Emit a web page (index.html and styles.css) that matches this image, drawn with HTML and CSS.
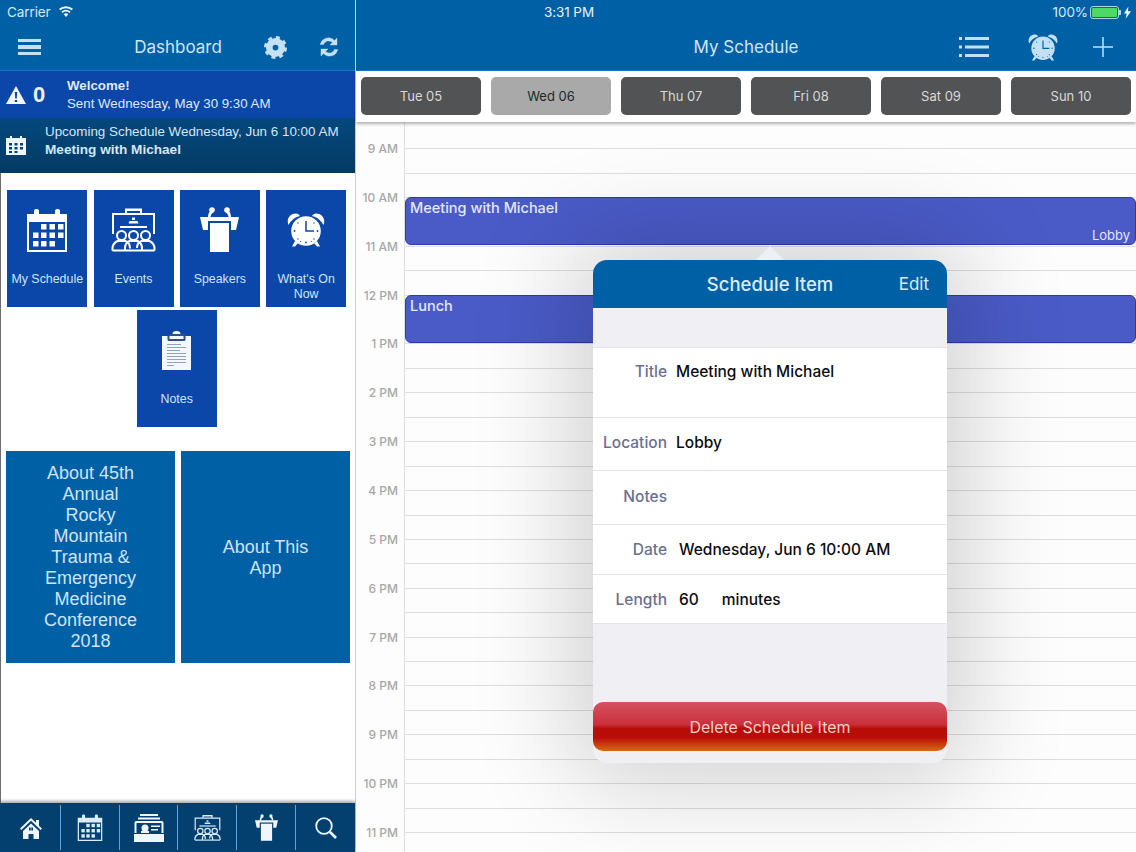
FILE: index.html
```html
<!DOCTYPE html>
<html lang="en">
<head>
<meta charset="utf-8">
<title>My Schedule</title>
<link rel="stylesheet" href="styles.css">
</head>
<body>
<svg class="sprite" aria-hidden="true">
  <symbol id="i-cal" viewBox="0 0 42 44">
    <path d="M1 6h7V3a2 2 0 0 1 2-2h1a2 2 0 0 1 2 2v3h16V3a2 2 0 0 1 2-2h1a2 2 0 0 1 2 2v3h7v38H1zM3 14v28h36V14z" fill-rule="evenodd"/>
    <rect x="15" y="16" width="5.500" height="5.500"/><rect x="23.500" y="16" width="5.500" height="5.500"/><rect x="32" y="16" width="5.500" height="5.500"/>
    <rect x="7" y="24.500" width="5.500" height="5.500"/><rect x="15" y="24.500" width="5.500" height="5.500"/><rect x="23.500" y="24.500" width="5.500" height="5.500"/><rect x="32" y="24.500" width="5.500" height="5.500"/>
    <rect x="7" y="33" width="5.500" height="5.500"/><rect x="15" y="33" width="5.500" height="5.500"/><rect x="23.500" y="33" width="5.500" height="5.500"/>
  </symbol>
  <symbol id="i-event" viewBox="0 0 45 45">
    <path d="M14 6V1.500h17V6h13v21h-2V8H3v19H1V6zM16 4v2h13V4z" fill-rule="evenodd"/>
    <rect x="21" y="10.500" width="3" height="2.500"/><path d="M18.500 14h8l1 2.500h-10z"/><rect x="9" y="19" width="27" height="2"/>
    <g class="ln ppl">
      <circle cx="10.500" cy="28.500" r="4.500"/><circle cx="22.500" cy="28.500" r="4.500"/><circle cx="34.500" cy="28.500" r="4.500"/>
      <path d="M1.500 43.500v-2c0-4 3-6.500 5-7.500h8c3 1 4.500 3.500 4.500 7.500"/><path d="M14 43.500v-2c0-4 2-6.500 4.500-7.500h8c2.500 1 4.500 3.500 4.500 7.500v2"/><path d="M26 41c0-4 1.500-6 4.500-7h8c2 1 5 3.500 5 7.500v2"/>
      <path d="M1.500 43.500h42"/>
    </g>
  </symbol>
  <symbol id="i-podium" viewBox="0 0 39 45">
    <path d="M0 10h39l-3 13h-5V14H8v9H3z"/><rect x="10" y="16" width="19" height="29"/>
    <circle cx="12" cy="3" r="2.800"/><circle cx="27" cy="3" r="2.800"/>
    <path d="M11 3c-2 2-3 4-3 7h2.500c0-2 1-3 3-5zM28 3c2 2 3 4 3 7h-2.500c0-2-1-3-3-5z"/>
  </symbol>
  <symbol id="i-clock" viewBox="0 0 38 34">
    <circle cx="19" cy="18" r="14.800"/>
    <path d="M1.500 12C-1 6 3 .5 9 .5c2 0 3 1 4 2.500C8 4 4 7.500 1.500 12zM36.500 12c2.500-6-1.500-11.500-7.500-11.500-2 0-3 1-4 2.500 5 1 9 4.500 11.500 9z"/>
    <path d="M8 28l-3 5.500h3l3-3.500zM30 28l3 5.500h-3l-3-3.500z"/>
    <path class="cut" d="M19 8v10h8"/>
    <g class="tick"><circle cx="19" cy="29.500" r=".9"/><circle cx="7.500" cy="18" r=".9"/><circle cx="30.500" cy="18" r=".9"/><circle cx="11" cy="10" r=".7"/><circle cx="27" cy="10" r=".7"/><circle cx="11" cy="26" r=".7"/><circle cx="27" cy="26" r=".7"/><circle cx="13.500" cy="28.500" r=".6"/><circle cx="24.500" cy="28.500" r=".6"/></g>
  </symbol>
  <symbol id="i-notes" viewBox="0 0 29 39">
    <rect y="5" width="29" height="34" fill="#f4f7fb"/>
    <path d="M10.500 3a4 3 0 0 1 8 0v2h-8z" fill="#f4f7fb"/>
    <path d="M5.500 5c0-1 .8-2 2-2h14c1.200 0 2 1 2 2v3.500c0 1-.8 1.500-2 1.500h-14c-1.200 0-2-.5-2-1.500z" fill="#2d4f8f"/>
    <path d="M7.500 5h14v3h-14z" fill="#f4f7fb"/>
    <path d="M5 13.500h14M5 16.500h19M5 19.500h13M5 22.500h19M5 25.500h19M5 28.500h19M5 31.500h19M5 34.500h7" stroke="#8497bc" stroke-width=".9" fill="none"/>
  </symbol>
  <symbol id="i-home" viewBox="0 0 22 22">
    <path d="M11 1L0 11.500l1.300 1.400L11 3.800l9.700 9.100 1.300-1.400-3-2.800V3h-3v2.700z"/>
    <path d="M3 14l8-7.500 8 7.500v8h-5.500v-5h-5v5H3zM9 10.500v3h1.700v-3zM11.300 10.500v3H13v-3z" fill-rule="evenodd"/>
  </symbol>
  <symbol id="i-box" viewBox="0 0 30 28">
    <rect x="6" y="0" width="18" height="2"/><rect x="4" y="3.500" width="22" height="2"/>
    <path d="M2 7h26c1 0 1.500 1 1.500 2v10h-2V9H2.500v10h-2V9c0-1 .5-2 1.500-2z"/>
    <circle cx="11" cy="14" r="3.500"/><rect x="7" y="17" width="8" height="2"/><rect x="17" y="11.500" width="9" height="1.500"/><rect x="17" y="15" width="7" height="1.500"/>
    <rect x="0" y="20" width="30" height="8"/>
  </symbol>
  <symbol id="i-search" viewBox="0 0 22 22">
    <circle class="ln" cx="9" cy="9" r="7.800"/><path class="ln thick" d="M15 15l6 6"/>
  </symbol>
  <symbol id="i-gear" viewBox="0 0 24 24">
    <circle class="ln gear-a" cx="12" cy="12" r="6.500"/><circle class="ln gear-b" cx="12" cy="12" r="10"/>
  </symbol>
  <symbol id="i-sync" viewBox="0 0 20 20">
    <path class="sync-shape" d="M18 1v7h-7l2.400-2.400A5.300 5.300 0 0 0 4.600 7.500H1.200A8.500 8.500 0 0 1 15.600 3.400zM2 19v-7h7l-2.400 2.400a5.300 5.300 0 0 0 8.800-1.900h3.400A8.500 8.500 0 0 1 4.400 16.600z"/>
  </symbol>
  <symbol id="i-warn" viewBox="0 0 20 18">
    <path d="M10 0L20 18H0zM8.800 6l.4 6.500h1.600L11.200 6zM8.800 14v2h2.400v-2z" fill-rule="evenodd"/>
  </symbol>
  <symbol id="i-cal-solid" viewBox="0 0 20 20">
    <path d="M0 3h4V1h2v2h8V1h2v2h4v17H0zM3 8v2.500h3V8zM8.500 8v2.500h3V8zM14 8v2.500h3V8zM3 12v2.500h3V12zM8.500 12v2.500h3V12zM14 12v2.500h3V12zM3 16v2h3v-2zM8.500 16v2h3v-2z" fill-rule="evenodd"/>
  </symbol>
  <symbol id="i-list" viewBox="0 0 30 20">
    <rect width="3" height="3"/><rect y="8.500" width="3" height="3"/><rect y="17" width="3" height="3"/>
    <rect x="6" width="24" height="3"/><rect x="6" y="8.500" width="24" height="3"/><rect x="6" y="17" width="24" height="3"/>
  </symbol>
  <symbol id="i-wifi" viewBox="0 0 16 12">
    <path d="M8 12L5.700 9.300a3.500 3.500 0 0 1 4.600 0zM4.600 8A5.300 5.300 0 0 1 11.400 8l1.200-1.400a7.200 7.200 0 0 0-9.200 0zM2.300 5.300a8.800 8.800 0 0 1 11.400 0L15 3.800a10.800 10.800 0 0 0-14 0z"/>
  </symbol>
</svg>

<div class="app">
  <aside class="side">
    <header class="bar">
      <div class="status">
        <span>Carrier</span>
        <svg class="ic-wifi"><use href="#i-wifi"/></svg>
      </div>
      <nav class="nav nav-side">
        <div class="nav-left">
          <span class="burger"><i></i><i></i><i></i></span>
        </div>
        <h1 class="nav-title">Dashboard</h1>
        <div class="nav-right side-actions">
          <svg class="ic-gear"><use href="#i-gear"/></svg>
          <svg class="ic-sync"><use href="#i-sync"/></svg>
        </div>
      </nav>
    </header>

    <section class="alert">
      <svg class="ic-warn"><use href="#i-warn"/></svg>
      <span class="alert-count">0</span>
      <div class="alert-text">
        <strong>Welcome!</strong>
        <span>Sent Wednesday, May 30 9:30 AM</span>
      </div>
    </section>

    <section class="upcoming">
      <svg class="ic-upcoming"><use href="#i-cal-solid"/></svg>
      <div class="upcoming-text">
        <span>Upcoming Schedule Wednesday, Jun 6 10:00 AM</span>
        <strong>Meeting with Michael</strong>
      </div>
    </section>

    <div class="side-body">
      <div class="tiles">
        <a class="tile"><svg class="t-cal"><use href="#i-cal"/></svg><span>My Schedule</span></a>
        <a class="tile"><svg class="t-event"><use href="#i-event"/></svg><span>Events</span></a>
        <a class="tile"><svg class="t-podium"><use href="#i-podium"/></svg><span>Speakers</span></a>
        <a class="tile"><svg class="t-clock"><use href="#i-clock"/></svg><span>What's On Now</span></a>
        <a class="tile"><svg class="t-notes"><use href="#i-notes"/></svg><span>Notes</span></a>
      </div>
      <div class="about">
        <a class="about-tile">About 45th Annual Rocky Mountain Trauma &amp; Emergency Medicine Conference 2018</a>
        <a class="about-tile">About This App</a>
      </div>
    </div>

    <footer class="tabs">
      <a class="tab"><svg class="tb-home"><use href="#i-home"/></svg></a>
      <a class="tab"><svg class="tb-cal"><use href="#i-cal"/></svg></a>
      <a class="tab"><svg class="tb-box"><use href="#i-box"/></svg></a>
      <a class="tab"><svg class="tb-event"><use href="#i-event"/></svg></a>
      <a class="tab"><svg class="tb-podium"><use href="#i-podium"/></svg></a>
      <a class="tab"><svg class="tb-search"><use href="#i-search"/></svg></a>
    </footer>
  </aside>

  <main class="main">
    <header class="bar">
      <div class="status status-main">
        <span class="status-gap"></span>
        <span class="status-time">3:31 PM</span>
        <div class="status-right">
          <span>100%</span>
          <span class="battery"><i></i></span>
          <svg class="ic-bolt" viewBox="0 0 8 14"><path d="M5 0L0 8h3l-1 6 6-8.500H4.500z"/></svg>
        </div>
      </div>
      <nav class="nav">
        <div class="nav-left"></div>
        <h1 class="nav-title">My Schedule</h1>
        <div class="nav-right main-actions">
          <svg class="ic-list"><use href="#i-list"/></svg>
          <svg class="ic-clock"><use href="#i-clock"/></svg>
          <svg class="ic-plus" viewBox="0 0 20 20"><path d="M10 0v20M0 10h20"/></svg>
        </div>
      </nav>
    </header>

    <div class="days">
      <button class="day">Tue 05</button>
      <button class="day is-active">Wed 06</button>
      <button class="day">Thu 07</button>
      <button class="day">Fri 08</button>
      <button class="day">Sat 09</button>
      <button class="day">Sun 10</button>
    </div>

    <div class="cal">
      <div class="cal-top"></div>
      <div class="hour"><span>9 AM</span><div></div></div>
      <div class="hour"><span>10 AM</span><div></div></div>
      <div class="hour"><span>11 AM</span><div></div></div>
      <div class="hour"><span>12 PM</span><div></div></div>
      <div class="hour"><span>1 PM</span><div></div></div>
      <div class="hour"><span>2 PM</span><div></div></div>
      <div class="hour"><span>3 PM</span><div></div></div>
      <div class="hour"><span>4 PM</span><div></div></div>
      <div class="hour"><span>5 PM</span><div></div></div>
      <div class="hour"><span>6 PM</span><div></div></div>
      <div class="hour"><span>7 PM</span><div></div></div>
      <div class="hour"><span>8 PM</span><div></div></div>
      <div class="hour"><span>9 PM</span><div></div></div>
      <div class="hour"><span>10 PM</span><div></div></div>
      <div class="hour"><span>11 PM</span><div></div></div>

      <div class="event event-meeting"><span>Meeting with Michael</span><em>Lobby</em></div>
      <div class="event event-lunch"><span>Lunch</span></div>

      <div class="pop">
        <span class="pop-arrow"></span>
        <div class="pop-head">
          <h2>Schedule Item</h2>
          <a>Edit</a>
        </div>
        <div class="pop-gap"></div>
        <div class="row row-title"><label>Title</label><b>Meeting with Michael</b></div>
        <div class="row row-loc"><label>Location</label><b>Lobby</b></div>
        <div class="row row-notes"><label>Notes</label><b></b></div>
        <div class="row row-date"><label>Date</label><b class="shift">Wednesday, Jun 6 10:00 AM</b></div>
        <div class="row row-len"><label>Length</label><b class="shift len"><span>60</span><span>minutes</span></b></div>
        <button class="delete">Delete Schedule Item</button>
      </div>
    </div>
  </main>
</div>
</body>
</html>
```

FILE: styles.css
```css
* { box-sizing: border-box; }
html, body { margin: 0; height: 100%; }
body { overflow: hidden; background: #fff; font-family: "Liberation Sans", Arial, sans-serif; }
.sprite { position: absolute; width: 0; height: 0; }
svg { display: block; fill: currentColor; }
h1, h2 { margin: 0; font-weight: 400; }

.ln { fill: none; stroke: currentColor; stroke-width: 1.800; }
.ppl { stroke-width: 2; }
.thick { stroke-width: 2.600; }
.gear-a { stroke-width: 7; }
.gear-b { stroke-width: 4; stroke-dasharray: 3.930 3.930; }
.sync-shape { stroke: currentColor; stroke-width: .4; }
.cut { fill: none; stroke: var(--cut, #0a47a8); stroke-width: 1.500; }
.tick { fill: var(--cut, #0a47a8); }

.app { display: flex; width: 1136px; height: 852px; }

/* Shared header */
.bar { height: 71px; background: #0060a5; color: #d3e8f8; border-bottom: 1px solid #1575bd; flex: none; }
.status { height: 24px; display: flex; align-items: center; padding-left: 7px; gap: 7px; font: 13.500px/24px "Inter", sans-serif; letter-spacing: -.1px; }
.ic-wifi { width: 16px; height: 12px; margin-top: -2px; color: #eef7fd; }
.nav { height: 46px; display: grid; grid-template-columns: 1fr auto 1fr; align-items: center; }
.nav-side { padding-left: 1px; }
.nav-title { font: 400 17px/24px "Inter", sans-serif; color: #cfe6f8; }
.nav-left { padding-left: 17px; }
.nav-right { display: flex; justify-content: flex-end; align-items: center; }

.burger { display: flex; flex-direction: column; gap: 3px; width: 23px; }
.burger i { display: block; height: 3.500px; background: #c6e0f4; }
.side-actions { gap: 32px; padding-right: 16px; color: #c6e0f4; }
.ic-gear { width: 23px; height: 23px; }
.ic-sync { width: 20px; height: 20px; }

/* Sidebar */
.side { width: 356px; flex: none; display: flex; flex-direction: column; border-right: 1px solid #c9ced3; }
.alert { height: 47px; flex: none; display: flex; align-items: center; background: #0a47a8; color: #dcebfa; padding-left: 6px; }
.ic-warn { width: 20px; height: 18px; color: #f2f6fb; }
.alert-count { font-weight: 700; font-size: 22px; width: 41px; padding-left: 7px; color: #e8f1fb; }
.alert-text { display: flex; flex-direction: column; font-size: 13.300px; line-height: 17.500px; }
.upcoming-text { display: flex; flex-direction: column; font-size: 13.400px; line-height: 18px; margin-top: -9px; }
.upcoming-text strong { font-size: 13.600px; }
.upcoming { height: 55px; flex: none; display: flex; align-items: center; background: linear-gradient(#05487e, #033a63); color: #d5e6f5; padding-left: 6px; gap: 19px; }
.ic-upcoming { width: 20px; height: 20px; color: #eef5fb; margin-top: -2px; }

.side-body { flex: 1; border-left: 1px solid #6c6c6c; background: #fff; padding-top: 17px; min-height: 0; }
.tiles { width: 340px; margin-left: 5.700px; display: flex; flex-wrap: wrap; justify-content: center; gap: 2.500px 6.300px; }
.tile { width: 80px; height: 117px; background: #0a47a8; color: #cfe4f8; display: flex; flex-direction: column; align-items: center; font-size: 12.400px; line-height: 14.500px; text-align: center; position: relative; padding: 0 2px; --cut: #0a47a8; }
.tile svg { color: #fff; flex: none; }
.tile span { position: absolute; top: 82px; left: 2px; right: 2px; }
.t-cal { width: 42px; height: 44px; margin-top: 18px; }
.t-event { width: 45px; height: 45px; margin-top: 17px; }
.t-podium { width: 39px; height: 45px; margin-top: 17px; }
.t-clock { width: 38px; height: 34px; margin-top: 23px; }
.t-notes { width: 29px; height: 39px; margin-top: 21px; }

.about { display: flex; gap: 6px; padding: 24.500px 0 0 5px; }
.about-tile { width: 169px; height: 212px; background: #0060a5; color: #cfe4f8; display: flex; align-items: center; justify-content: center; text-align: center; font-size: 18px; line-height: 21px; padding: 1px 35px 0; }

.tabs { height: 49px; flex: none; display: flex; background: #03406f; color: #f0f6fb; padding: 2px 0 2px 2px; box-shadow: 0 -2px 3px rgba(0,0,0,.35); position: relative; }
.tab { width: 59px; display: flex; align-items: center; justify-content: center; border-right: 1px solid #5da4da; }
.tab:last-child { border-right: 0; }
.tb-home { width: 22px; height: 22px; }
.tb-cal { width: 26px; height: 27px; color: #dcecf8; }
.tb-box { width: 30px; height: 28px; }
.tb-event { width: 29px; height: 27px; color: #dcecf8; }
.tb-podium { width: 23px; height: 27px; }
.tb-search { width: 22px; height: 22px; }

/* Main */
.main { flex: 1; min-width: 0; display: flex; flex-direction: column; }
.status-main { padding: 0 5px 0 0; gap: 0; display: grid; grid-template-columns: 188px auto 1fr; }
.status-time { color: #e8f3fb; }
.status-right { display: flex; justify-content: flex-end; align-items: center; gap: 2px; color: #d8eaf8; }
.battery { width: 29px; height: 13px; border: 1px solid #a9d4ee; border-radius: 3px; padding: 1px; position: relative; }
.battery i { display: block; height: 100%; background: #4cd964; border-radius: 1px; }
.battery::after { content: ""; position: absolute; right: -3px; top: 3px; width: 2px; height: 5px; background: #a9d4ee; }
.ic-bolt { width: 7px; height: 13px; margin-left: 3px; color: #f4fafe; }
.main-actions { padding-right: 23px; color: #c3e1f6; --cut: #0060a5; }
.ic-list { width: 30px; height: 20px; }
.ic-clock { width: 30px; height: 27px; margin-left: 39px; }
.ic-plus { width: 20px; height: 20px; margin-left: 35px; fill: none; stroke: #c3e1f6; stroke-width: 1.500; }

.days { height: 51px; flex: none; display: flex; gap: 10px; padding: 6px 5px 0; background: #fff; box-shadow: 0 2px 3px rgba(0,0,0,.3); position: relative; z-index: 1; }
.day { width: 120px; height: 38px; border: 0; border-radius: 5px; background: #525354; color: #d9d9d9; font: 13px "Inter", sans-serif; padding: 0; }
.day.is-active { background: #a9a9a9; color: #262626; }

.cal { flex: 1; min-height: 0; position: relative; overflow: hidden; background: #fdfdfd; }
.cal-top { height: 26px; margin-left: 48px; border-left: 1px solid #dedede; }
.hour { height: 48.860px; display: grid; grid-template-columns: 48px 1fr; }
.hour span { font: 500 12px/14px "Inter", sans-serif; color: #a7a7a7; text-align: right; padding-right: 6px; margin-top: -6px; white-space: nowrap; }
.hour div { border-left: 1px solid #dedede; border-top: 1px solid #dedede; background: linear-gradient(#dedede, #dedede) 0 23.500px / 100% 1px no-repeat; }

.event { position: absolute; left: 49px; right: 0; height: 48px; background: #4a5bc8; border: 1px solid #2a3ab0; border-radius: 6px; color: #e4e8fb; font: 500 14.500px/18px "Inter", sans-serif; padding: .5px 0 0 4px; }
.event em { position: absolute; right: 5px; bottom: 1px; font: 400 13px/16px "Inter", sans-serif; }
.event-meeting { top: 75px; }
.event-lunch { top: 173px; }

.pop { position: absolute; left: 237px; top: 138px; width: 354px; height: 503px; background: #efeff4; border-radius: 14px; box-shadow: 0 0 100px 20px rgba(0,0,0,.18); display: flex; flex-direction: column; }
.pop-arrow { position: absolute; left: 163px; top: -14px; border: 14px solid transparent; border-top: 0; border-bottom-color: #eef0f5; }
.pop-head { height: 48px; flex: none; background: #0060a5; border-radius: 14px 14px 0 0; color: #d9ecfa; display: grid; grid-template-columns: 1fr auto 1fr; align-items: center; position: relative; }
.pop-head h2 { grid-column: 2; font: 500 18.500px/26px "Inter", sans-serif; }
.pop-head a { grid-column: 3; justify-self: end; padding: 0 18px 0 0; font: 400 17px/26px "Inter", sans-serif; }
.pop-gap { height: 39px; flex: none; }
.row { display: flex; align-items: center; background: #fff; border-top: 1px solid #e3e3e8; font: 15.500px/20px "Inter", sans-serif; flex: none; }
.row label { width: 74px; text-align: right; color: #6b6f90; font-weight: 500; flex: none; }
.row b { margin-left: 9px; font-weight: 500; color: #0c0c10; white-space: nowrap; }
.row b.shift { margin-left: 12px; }
.row-title { height: 70px; align-items: flex-start; padding-top: 13.500px; }
.row-loc { height: 53px; padding-bottom: 3px; }
.row-notes { height: 54px; padding-bottom: 2px; }
.row-date { height: 50px; }
.row-len { height: 50px; padding-top: 1px; border-bottom: 1px solid #e3e3e8; }
.len { display: flex; gap: 23px; }
.delete { margin-top: 78px; height: 49px; flex: none; border: 0; border-radius: 10px; color: #f7d0ca; font: 400 16px "Inter", sans-serif; background: linear-gradient(#d65360 0, #c8303c 46%, #b80c06 54%, #b80c06 72%, #d86a10 100%); }
```
